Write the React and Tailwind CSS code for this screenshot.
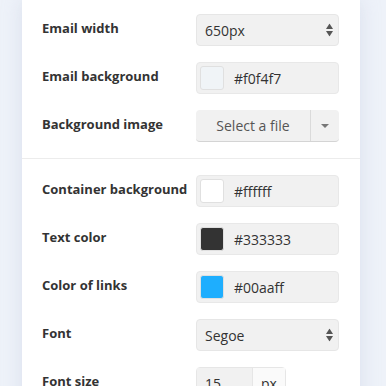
import React from "react";

function Arrows() {
  return (
    <svg width="7" height="13" viewBox="0 0 7 13" className="absolute right-[5px] top-1/2 -translate-y-1/2">
      <polygon points="3.5,0 7,5.5 0,5.5" fill="#555" />
      <polygon points="0,7.5 7,7.5 3.5,13" fill="#555" />
    </svg>
  );
}

function Label({ children }) {
  return (
    <div className="w-[154px] shrink-0 pb-[3px] text-[13px] font-bold text-[#333]">{children}</div>
  );
}

function Row({ label, children }) {
  return (
    <div className="flex h-8 items-center">
      <Label>{label}</Label>
      {children}
    </div>
  );
}

function SelectBox({ value }) {
  return (
    <div className="relative flex h-8 w-[143px] items-center rounded-[4px] border border-[#e6e6e6] bg-[#f1f1f1] pl-[8px] text-[14px] text-[#333]">
      {value}
      <Arrows />
    </div>
  );
}

function ColorBox({ color, value }) {
  return (
    <div className="flex h-8 w-[143px] items-center rounded-[4px] border border-[#e8e8e8] bg-[#f1f1f1] pl-[3px] text-[14px] text-[#333]">
      <div
        className="h-6 w-6 rounded-[3px] border border-[#e0e0e0]"
        style={{ backgroundColor: color }}
      />
      <span className="ml-[10px]">{value}</span>
    </div>
  );
}

export default function App() {
  return (
    <div
      className="h-[386px] w-[386px] overflow-hidden bg-[#eef2f9] pl-[22px]"
      style={{ fontFamily: '"Open Sans", "Liberation Sans", sans-serif' }}
    >
      <div className="h-[420px] w-[338px] bg-white pt-[14px] shadow-[0_0_18px_rgba(180,190,215,0.35)]">
        <div className="flex flex-col gap-4 pl-5">
          <Row label="Email width">
            <SelectBox value="650px" />
          </Row>
          <Row label="Email background">
            <ColorBox color="#f0f4f7" value="#f0f4f7" />
          </Row>
          <Row label="Background image">
            <div className="flex h-8 w-[143px] rounded-[4px] border-b border-[#d4d4d4] bg-[#f1f1f1] text-[14px] text-[#555]">
              <div className="flex flex-1 items-center justify-center border-r border-[#dadada]">Select a file</div>
              <div className="flex w-[28px] items-center justify-center">
                <svg width="8" height="4" viewBox="0 0 8 4">
                  <polygon points="0,0 8,0 4,4" fill="#777" />
                </svg>
              </div>
            </div>
          </Row>
        </div>
        <div className="mt-4 border-t border-[#ececec]" />
        <div className="flex flex-col gap-4 pl-5 pt-4">
          <Row label="Container background">
            <ColorBox color="#ffffff" value="#ffffff" />
          </Row>
          <Row label="Text color">
            <ColorBox color="#333333" value="#333333" />
          </Row>
          <Row label="Color of links">
            <ColorBox color="#1eaefe" value="#00aaff" />
          </Row>
          <Row label="Font">
            <SelectBox value="Segoe" />
          </Row>
          <Row label="Font size">
            <div className="flex h-8 w-[90px] rounded-[4px] border border-[#e6e6e6] text-[14px] text-[#333]">
              <div className="flex w-[55px] items-center bg-[#f1f1f1] pl-[8px]">15</div>
              <div className="flex flex-1 items-center justify-center border-l border-[#e6e6e6] bg-[#fafafa]">px</div>
            </div>
          </Row>
        </div>
      </div>
    </div>
  );
}
